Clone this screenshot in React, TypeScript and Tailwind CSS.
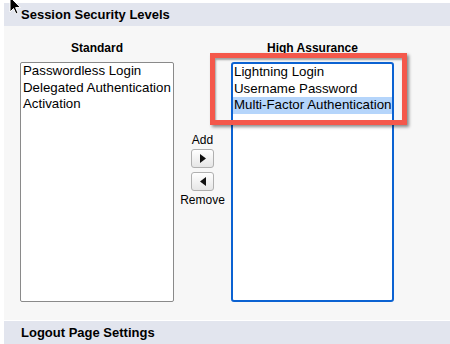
import React from 'react';

const standard = ['Passwordless Login', 'Delegated Authentication', 'Activation'];
const high = ['Lightning Login', 'Username Password', 'Multi-Factor Authentication'];

const MoveButton = ({ dir }: { dir: 'right' | 'left' }) => (
  <button className="w-[23px] h-[19px] flex items-center justify-center rounded-[3px] border border-[#b0b0b0] bg-gradient-to-b from-white to-[#e6e6e6]">
    <svg width="6" height="9" viewBox="0 0 6 9">
      {dir === 'right' ? <path d="M0 0 L6 4.5 L0 9 Z" fill="#111" /> : <path d="M6 0 L0 4.5 L6 9 Z" fill="#111" />}
    </svg>
  </button>
);

export default function App() {
  return (
    <div className="relative w-[450px] h-[344px] overflow-hidden bg-white pl-[4px] pt-[3px] font-['Liberation_Sans',Arial,sans-serif] text-black">
      <div className="h-[23px] bg-[#e2e5ee] flex items-center pl-[17px] text-[13px] font-bold">
        Session Security Levels
      </div>

      <div className="h-[294px] bg-[#f7f7f7] flex pl-[16px] pt-[14px]">
        <div className="flex flex-col w-[154px]">
          <div className="text-[12px] leading-[16px] font-bold text-center mb-[6px]">Standard</div>
          <div className="h-[240px] bg-white border border-[#8a8a8a] rounded-[2px] text-[13.3px] leading-[16.7px] pl-[2px]">
            {standard.map((s) => (
              <div key={s} className="whitespace-nowrap">{s}</div>
            ))}
          </div>
        </div>

        <div className="w-[57px] flex flex-col items-center pt-[93px] text-[12px] leading-[14px]">
          <div>Add</div>
          <div className="mt-[2px] flex flex-col gap-[4px]">
            <MoveButton dir="right" />
            <MoveButton dir="left" />
          </div>
          <div className="mt-[2px]">Remove</div>
        </div>

        <div className="flex flex-col w-[163px]">
          <div className="text-[12px] leading-[16px] font-bold text-center mb-[6px]">High Assurance</div>
          <div className="h-[240px] bg-white border-2 border-[#0b62d2] rounded-[3px] text-[13.3px] leading-[16.7px]">
            {high.map((s, i) => (
              <div key={s} className={`whitespace-nowrap pl-[1px] ${i === 2 ? 'bg-[#b5d5fb]' : ''}`}>{s}</div>
            ))}
          </div>
        </div>
      </div>

      <div className="h-[24px] bg-[#e2e5ee] border-t border-white flex items-center pl-[17px] text-[13px] font-bold">
        Logout Page Settings
      </div>

      <div className="absolute left-[210px] top-[53px] w-[197px] h-[72px] border-[5px] border-[#f4584b] shadow-[2px_2px_3px_rgba(0,0,0,0.45),inset_1px_2px_2px_rgba(0,0,0,0.35)]" />

      <svg className="absolute left-[9px] top-[-4px]" width="13" height="20" viewBox="0 0 13 20">
        <path d="M1 1 L1 16 L4.5 12.5 L7 18 L9 17 L6.6 11.6 L11.5 11.6 Z" fill="#000" stroke="#fff" strokeWidth="1" />
      </svg>
    </div>
  );
}
